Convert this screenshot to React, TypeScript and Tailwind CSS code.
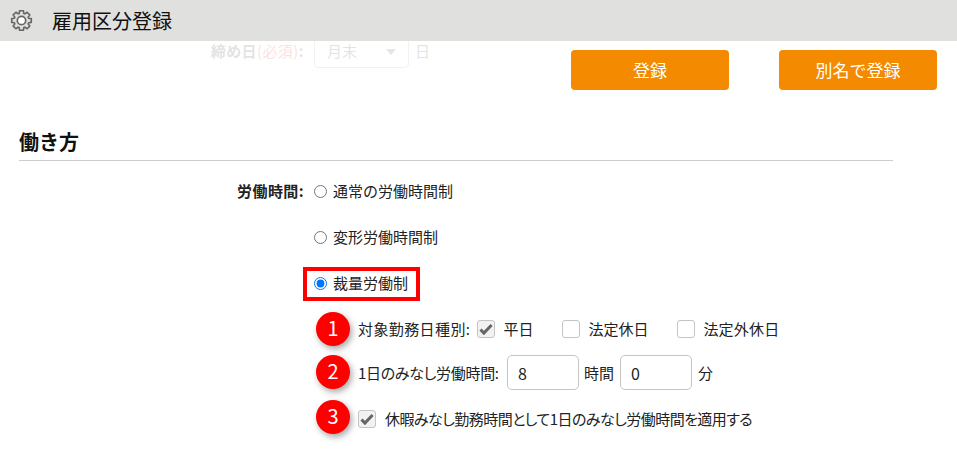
const FONT = "font-['Noto_Sans_CJK_JP','Noto_Sans',sans-serif]";

// outline of an 8-toothed gear, centred on 12,12
const gearPath = Array.from({ length: 8 }, (_, i) => {
  const pt = (deg: number, r: number) => {
    const a = ((i * 45 + deg) * Math.PI) / 180;
    return `${(12 + r * Math.sin(a)).toFixed(2)} ${(12 - r * Math.cos(a)).toFixed(2)}`;
  };
  return `${i === 0 ? "M" : "L"}${pt(-11, 10.4)} L${pt(11, 10.4)} L${pt(18, 7.8)} L${pt(27, 7.8)}`;
}).join(" ") + " Z";

function Gear() {
  return (
    <svg width="23" height="23" viewBox="0 0 24 24" fill="none" aria-hidden="true">
      <path d={gearPath} stroke="#666" strokeWidth="1.7" strokeLinejoin="round" />
      <circle cx="12" cy="12" r="4.4" fill="#fff" stroke="#666" strokeWidth="1.8" />
    </svg>
  );
}

function Check({ checked = false, className = "" }: { checked?: boolean; className?: string }) {
  return (
    <span
      className={`flex h-[18px] w-[18px] shrink-0 items-center justify-center rounded-[3px] border border-[#c4c4c4] ${
        checked ? "bg-[#f2f2f2]" : "bg-white"
      } ${className}`}
    >
      {checked && (
        <svg width="14" height="12" viewBox="0 0 14 12" fill="none" aria-hidden="true">
          <path d="M1.5 6.5l3.4 3.6L12.6 2" stroke="#666" strokeWidth="3" />
        </svg>
      )}
    </span>
  );
}

function Badge({ n, className }: { n: number; className: string }) {
  return (
    <span
      className={`absolute left-[316px] flex h-[34px] w-[34px] items-center justify-center rounded-full bg-[#ff0000] pb-[3px] text-[20px] text-white shadow-[2px_3px_6px_rgba(0,0,0,0.35)] ${className}`}
    >
      {n}
    </span>
  );
}

function RadioRow({ label, text, checked }: { label?: string; text: string; checked?: boolean }) {
  return (
    <div className="flex h-[46px] items-center">
      <span className="w-[285px] text-right text-[15px] font-bold tracking-[0.4px]">{label}</span>
      <label className="relative ml-[10px] flex items-center gap-[6px]">
        <input type="radio" name="work" defaultChecked={checked} className="m-0 h-[13px] w-[13px]" />
        <span>{text}</span>
        {checked && (
          <span className="absolute left-[-11px] top-[-5px] h-[34px] w-[117px] border-4 border-[#ff0000]" />
        )}
      </label>
    </div>
  );
}

function NumberBox({ value }: { value: string }) {
  return (
    <span className="mb-[2px] flex h-[35px] w-[72px] items-center rounded-[5px] border border-[#c4c4c4] bg-white pl-[10px] text-[16px]">
      {value}
    </span>
  );
}

export default function App() {
  return (
    <div className={`relative h-[459px] w-[957px] overflow-hidden bg-white text-[15px] text-[#222] ${FONT}`}>
      <header className="relative z-10 flex h-[41px] items-center bg-[#e0e0de] pl-[10px] text-[20px] text-[#111]">
        <Gear />
        <h1 className="ml-[19px] font-normal">雇用区分登録</h1>
      </header>

      <div className="flex h-[49px] items-start">
        <div className="mt-[-3px] flex items-center opacity-[0.12]">
          <span className="w-[304px] pb-[3px] text-right font-bold tracking-[0.4px]">
            締め日<span className="font-normal text-[#e00]">(必須)</span>:
          </span>
          <span className="ml-[10px] flex h-[30px] w-[95px] items-center justify-between rounded-[4px] border border-[#999] px-[12px] pb-[3px]">
            月末
            <span className="h-0 w-0 border-x-[5px] border-t-[6px] border-x-transparent border-t-[#333]" />
          </span>
          <span className="ml-[6px] pb-[3px]">日</span>
        </div>
        <div className="ml-auto mr-[20px] mt-[9px] flex gap-[50px] text-[17px] text-white">
          <button className="flex h-[40px] w-[158px] items-center justify-center rounded-[4px] bg-[#f38a00]">登録</button>
          <button className="flex h-[40px] w-[158px] items-center justify-center rounded-[4px] bg-[#f38a00]">別名で登録</button>
        </div>
      </div>

      <div className="ml-[19px] mt-[38px] flex h-[33px] w-[874px] items-center border-b border-[#cccccc] pb-[5px]">
        <h2 className="text-[20px] font-bold text-[#111]">働き方</h2>
      </div>

      <div className="ml-[19px] mt-[7px]">
        <RadioRow label="労働時間:" text="通常の労働時間制" />
        <RadioRow text="変形労働時間制" />
        <RadioRow text="裁量労働制" checked />
      </div>

      <div className="pl-[358px]">
        <div className="flex h-[46px] items-center">
          <span className="tracking-[0.4px]">対象勤務日種別:</span>
          <Check checked className="ml-[7px]" />
          <span className="ml-[8px]">平日</span>
          <Check className="ml-[29px]" />
          <span className="ml-[8px]">法定休日</span>
          <Check className="ml-[29px]" />
          <span className="ml-[8px] tracking-[0.2px]">法定外休日</span>
        </div>
        <div className="flex h-[43px] items-center">
          <span className="w-[143px] whitespace-nowrap tracking-[-0.3px] [font-feature-settings:'palt']">1日のみなし労働時間:</span>
          <span className="ml-[6px]"><NumberBox value="8" /></span>
          <span className="ml-[5px]">時間</span>
          <span className="ml-[6px]"><NumberBox value="0" /></span>
          <span className="ml-[6px]">分</span>
        </div>
        <div className="mt-[3px] flex h-[42px] items-center">
          <Check checked />
          <span className="ml-[9px] whitespace-nowrap tracking-[-0.55px] [font-feature-settings:'palt']">休暇みなし勤務時間として1日のみなし労働時間を適用する</span>
        </div>
      </div>

      <Badge n={1} className="top-[312px]" />
      <Badge n={2} className="top-[355px]" />
      <Badge n={3} className="top-[400px]" />
    </div>
  );
}
